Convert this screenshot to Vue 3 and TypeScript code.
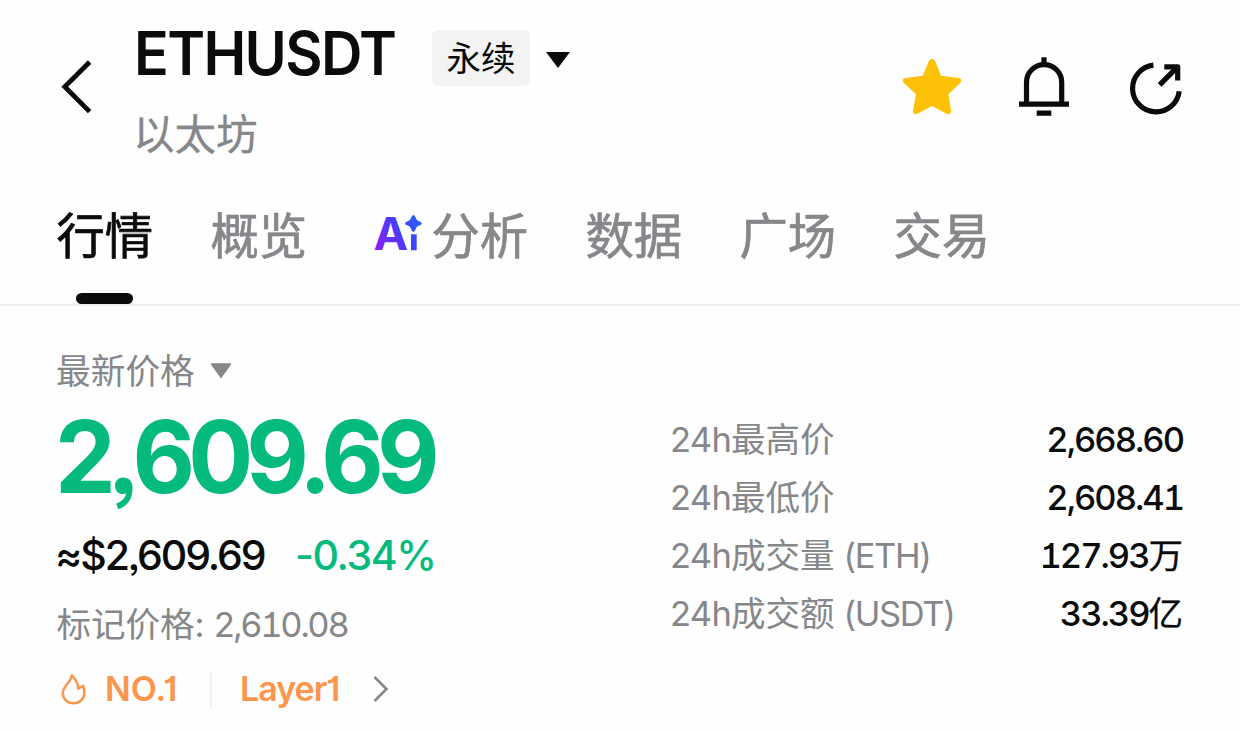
<script setup lang="ts">
interface Tab {
  label: string
  active?: boolean
  ai?: boolean
}

interface Stat {
  label: string
  unit?: string
  value: string
  scale?: string
}

const tabs: Tab[] = [
  { label: '行情', active: true },
  { label: '概览' },
  { label: '分析', ai: true },
  { label: '数据' },
  { label: '广场' },
  { label: '交易' },
]

const stats: Stat[] = [
  { label: '最高价', value: '2,668.60' },
  { label: '最低价', value: '2,608.41' },
  { label: '成交量', unit: '(ETH)', value: '127.93', scale: '万' },
  { label: '成交额', unit: '(USDT)', value: '33.39', scale: '亿' },
]
</script>

<template>
  <main class="screen">
    <header class="header">
      <svg class="back" width="32" height="54" viewBox="60 60 32 54">
        <path d="M89.6 62 64.8 86.8 89.6 111.6" fill="none" stroke="#0a0b0b" stroke-width="4.8" />
      </svg>
      <div class="pair">
        <div class="pair-top">
          <h1 class="symbol">ETHUSDT</h1>
          <span class="badge">永续</span>
          <svg class="caret" width="24" height="16" viewBox="0 0 24 16"><path d="M0 0H24L12 16Z" fill="#0a0b0b" /></svg>
        </div>
        <div class="pair-name">以太坊</div>
      </div>
      <div class="actions">
        <svg width="60" height="60" viewBox="902 57 60 60">
          <path fill="#ffc107" d="M929 60.8Q932 56.8 935 60.8L941 75.7 958.8 78Q963.5 79 959.6 83.5L948.3 94.3 951 110.5Q951 115.6 946.5 113.8L932 106 917.5 113.8Q913 115.6 913 110.5L916 94.3 904.4 83.5Q900.5 79 905.2 78L922.7 75.7Z" />
        </svg>
        <svg width="50" height="60" viewBox="1019 57 50 60" fill="none" stroke="#0a0b0b" stroke-width="5.2">
          <path d="M1044 57.3V64M1026.5 104V82.2a17.6 17.6 0 0 1 35.2 0V104M1019 104.2H1069M1036.7 113.2H1051.3" />
        </svg>
        <svg width="56" height="60" viewBox="1129 57 56 60" fill="none" stroke="#0a0b0b" stroke-width="5.2">
          <path d="M1153.4 65.2A23.4 23.4 0 1 0 1179.2 91.2M1159.6 84.8 1177.6 66.8" />
          <path d="M1164.3 66.9H1177.7V80.4" stroke-linejoin="round" />
        </svg>
      </div>
    </header>

    <nav class="tabs">
      <div v-for="tab in tabs" :key="tab.label" class="tab" :class="{ active: tab.active, 'with-ai': tab.ai }">
        <svg v-if="tab.ai" class="ai" width="54" height="60" viewBox="372 204 54 60">
          <defs>
            <linearGradient id="ai-fill" gradientUnits="userSpaceOnUse" x1="375" y1="250" x2="418" y2="222">
              <stop offset="0" stop-color="#8a22f2" />
              <stop offset="0.55" stop-color="#5038ff" />
              <stop offset="1" stop-color="#2a5cff" />
            </linearGradient>
          </defs>
          <text x="373.6" y="250.3" textLength="34.6" lengthAdjust="spacingAndGlyphs" class="ai-letter" fill="url(#ai-fill)">A</text>
          <path fill="url(#ai-fill)" d="M411 234.3H416.7V250.3H411ZM413.4 215Q414.8 215 415.6 217.6 416.4 220.4 419 221.2 421.8 222 421.8 223.4 421.8 224.8 419 225.6 416.4 226.4 415.6 229.2 414.8 231.7 413.4 231.7 412 231.7 411.2 229.2 410.4 226.4 407.8 225.6 405 224.8 405 223.4 405 222 407.8 221.2 410.4 220.4 411.2 217.6 412 215 413.4 215Z" />
        </svg>
        <span>{{ tab.label }}</span>
      </div>
    </nav>

    <section class="market">
      <div class="price-col">
        <div class="price-label">
          最新价格
          <svg width="22" height="16" viewBox="0 0 22 16"><path d="M1.5 1H20.5L11 14.4Z" fill="#85878a" stroke="#85878a" stroke-width="1.4" stroke-linejoin="round" /></svg>
        </div>
        <div class="price">2<span class="comma">,</span>609.69</div>
        <div class="fiat"><span class="approx">≈$2,609.69</span><span class="change">-0.34%</span></div>
        <div class="mark">标记价格: <span>2,610.08</span></div>
        <div class="tags">
          <svg class="flame" width="26" height="32" viewBox="60 673 26 32" fill="none" stroke="#fb964c" stroke-width="2.5" stroke-linejoin="round">
            <path d="M71.8 675.4C71.500 682 62.800 685.500 62.800 693.300A10.700 10 0 0 0 84.200 693.300Q84.300 689.500 83.200 685.800L78.300 688.800C78 683.500 75.500 679 71.800 675.400Z" />
          </svg>
          <span class="rank">NO.1</span>
          <i class="divider"></i>
          <span class="sector">Layer1</span>
          <svg width="16" height="26" viewBox="0 0 16 26"><path d="M1.500 1 13.500 13 1.500 25" fill="none" stroke="#85878a" stroke-width="2.600" /></svg>
        </div>
      </div>
      <dl class="stats">
        <div v-for="stat in stats" :key="stat.label" class="stat">
          <dt><span class="latin">24h</span>{{ stat.label }}<span v-if="stat.unit" class="unit">{{ stat.unit }}</span></dt>
          <dd>{{ stat.value }}<span v-if="stat.scale" class="scale">{{ stat.scale }}</span></dd>
        </div>
      </dl>
    </section>
  </main>
</template>

<style>
body {
  margin: 0;
  background: #fefefe;
}
</style>

<style scoped>
.screen {
  box-sizing: border-box;
  width: 1240px;
  height: 731px;
  overflow: hidden;
  background: #fefefe;
  color: #0a0b0b;
  font-family: Inter, "Noto Sans CJK SC", sans-serif;
  font-feature-settings: "cv01", "ss03";
}
svg {
  display: block;
  flex: none;
}
.header {
  display: flex;
  height: 176px;
  padding: 0 55px 0 60px;
  box-sizing: border-box;
}
.back {
  margin-top: 60px;
}
.pair {
  margin-left: 42px;
}
.pair-top {
  display: flex;
  align-items: center;
  height: 60px;
  margin-top: 28px;
}
.symbol {
  width: 298px;
  margin: -10px 0 0;
  font-size: 60px;
  line-height: 60px;
  font-weight: 640;
  letter-spacing: -1.7px;
  transform: scaleX(0.957);
  transform-origin: 0 50%;
}
.badge {
  width: 98px;
  height: 56px;
  border-radius: 6px;
  background: #f3f3f3;
  font-size: 34.5px;
  line-height: 57px;
  text-align: center;
}
.caret {
  margin: 4px 0 0 16px;
}
.pair-name {
  margin: 17px 0 0 -1px;
  font-size: 41.5px;
  line-height: 60px;
  color: #85878a;
  -webkit-text-stroke: 0.3px currentColor;
}
.actions {
  display: flex;
  gap: 57px;
  margin: 57px 0 0 auto;
}
.actions svg:last-child {
  margin-left: 3px;
}
.tabs {
  display: flex;
  gap: 57.3px;
  height: 128px;
  padding-left: 56.5px;
  border-bottom: 2px solid #f1f1f2;
}
.tab {
  display: flex;
  align-items: center;
  height: 122px;
  font-size: 48.35px;
  font-weight: 400;
  -webkit-text-stroke: 0.7px currentColor;
  line-height: 122px;
  color: #85878a;
  position: relative;
}
.tab.active {
  color: #0a0b0b;
}
.tab.active::after {
  content: "";
  position: absolute;
  left: 19.7px;
  bottom: -6px;
  width: 56.5px;
  height: 11px;
  border-radius: 6px;
  background: #0a0b0b;
}
.with-ai {
  margin-left: 8px;
}
.ai {
  margin: 0 5px 6px 0;
  -webkit-text-stroke: 0;
}
.ai-letter {
  font-size: 45px;
  font-weight: 700;
}
.market {
  display: flex;
  justify-content: space-between;
  padding: 0 56px 0 56px;
}
.price-label {
  display: flex;
  align-items: center;
  gap: 15px;
  margin-top: 41px;
  font-size: 34.7px;
  line-height: 48px;
  color: #85878a;
}
.price {
  margin: 12px 0 0 -1px;
  width: 400px;
  font-size: 100px;
  line-height: 100px;
  font-weight: 680;
  letter-spacing: -7.3px;
  color: #05ba7d;
  transform: scaleX(0.965);
  transform-origin: 0 50%;
}
.comma {
  letter-spacing: -8.8px;
}
.fiat {
  display: flex;
  margin: 18px 0 0 -1px;
  font-size: 41px;
  line-height: 60px;
  font-weight: 500;
}
.approx {
  width: 240px;
  letter-spacing: -2.1px;
}
.change {
  color: #05ba7d;
  letter-spacing: -1.4px;
}
.mark {
  margin: 16px 0 0 0.5px;
  font-size: 34.5px;
  line-height: 48px;
  color: #85878a;
}
.mark span {
  margin-left: -1px;
  font-feature-settings: "cv01", "ss03", "tnum";
  letter-spacing: -2.3px;
}
.tags {
  display: flex;
  align-items: center;
  margin: 16px 0 0 4px;
  font-size: 34px;
  line-height: 48px;
  font-weight: 560;
  color: #fb964c;
}
.rank {
  width: 86px;
  margin-left: 19px;
}
.divider {
  width: 2px;
  height: 36px;
  margin: 0 28px 0 19px;
  background: #f1f1f2;
}
.sector {
  width: 133px;
  letter-spacing: -1px;
}
.stats {
  width: 514px;
  margin: 105px 0 0;
}
.stat {
  display: flex;
  justify-content: space-between;
  height: 58px;
  font-size: 34.5px;
  line-height: 58px;
}
.stat dt {
  color: #85878a;
}
.latin {
  letter-spacing: -0.7px;
}
.unit {
  margin-left: 9px;
  letter-spacing: -1.4px;
}
.stat dd {
  margin: 0 1px 0 0;
  font-weight: 500;
  letter-spacing: -2px;
  font-feature-settings: "cv01", "ss03", "tnum";
}
.scale {
  font-weight: 400;
  letter-spacing: 0;
  -webkit-text-stroke: 0.3px currentColor;
}
</style>
